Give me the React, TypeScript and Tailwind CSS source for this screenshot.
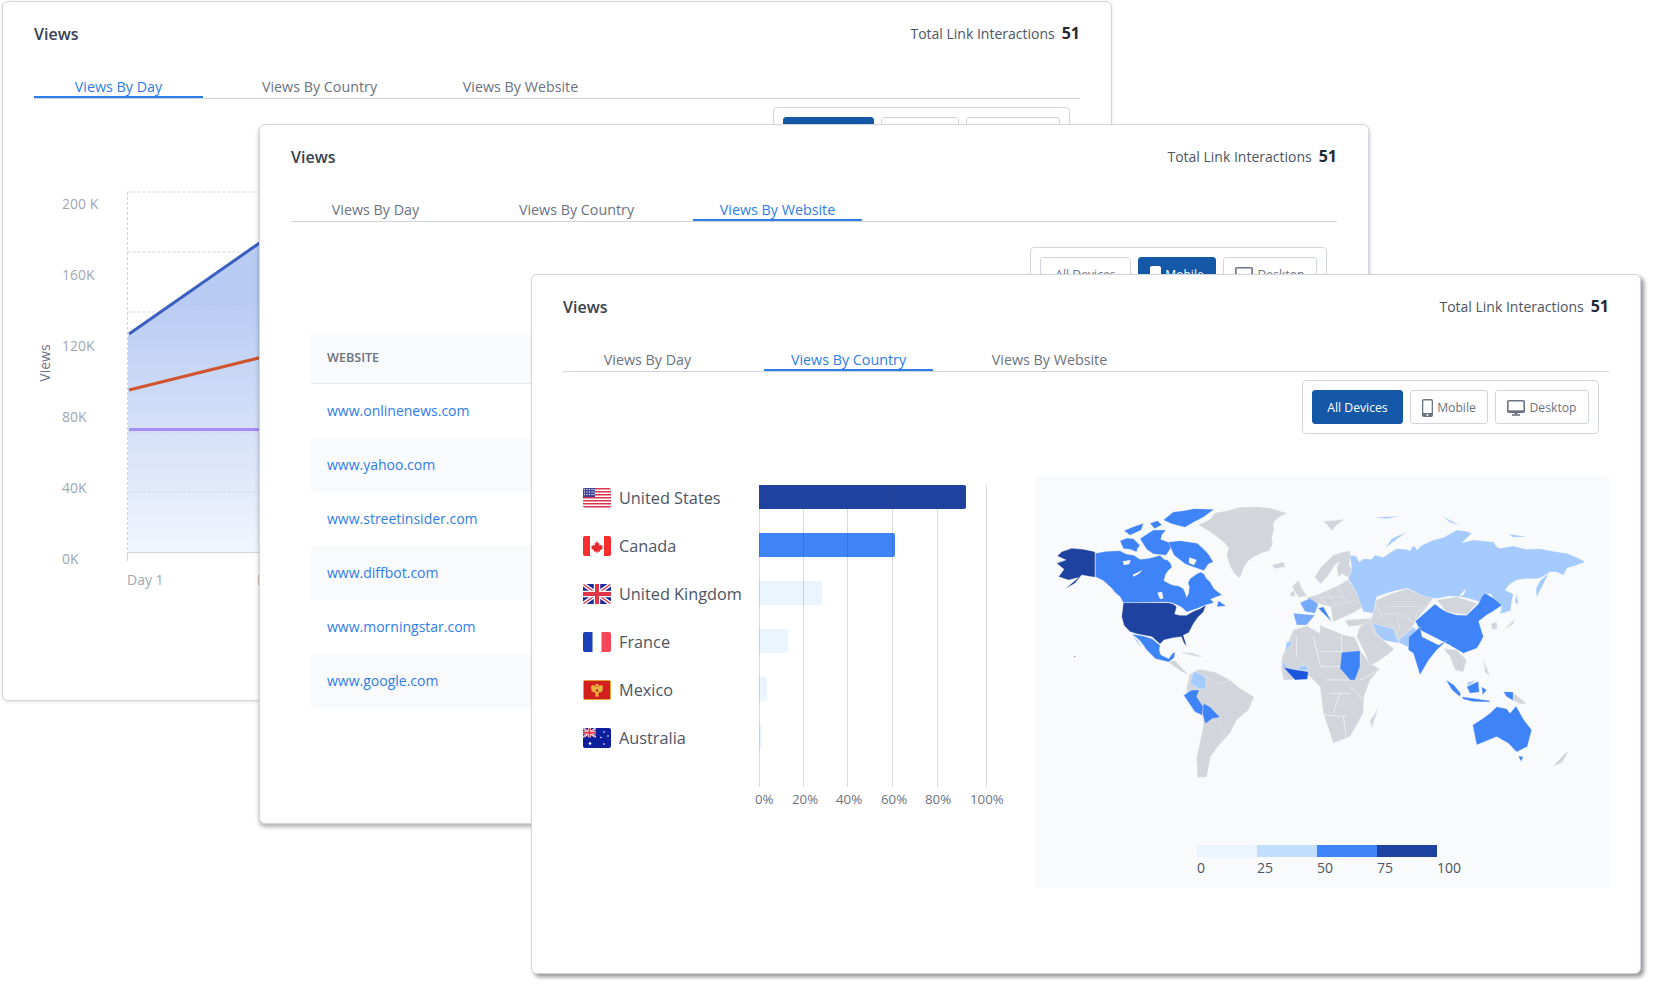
import React from "react";

const G = "#d2d6dc";
const B5 = "#3f83f8";
const B3 = "#a4cafe";
const B4 = "#76a9fa";
const B8 = "#1e429f";
const B6 = "#1a56db";

function PhoneIcon() {
  return (
    <svg width="11" height="18" viewBox="0 0 11 18" className="shrink-0">
      <rect x="0" y="0" width="11" height="18" rx="2" fill="currentColor" />
      <rect x="1.3" y="1.5" width="8.4" height="12.5" fill="#fff" />
      <circle cx="5.5" cy="16" r="1" fill="#fff" />
    </svg>
  );
}

function MonitorIcon() {
  return (
    <svg width="18" height="16" viewBox="0 0 18 16" className="shrink-0">
      <rect x="0.8" y="0.8" width="16.4" height="11.4" rx="1.2" fill="#fff" stroke="currentColor" strokeWidth="1.6" />
      <rect x="0.7" y="10.3" width="16.6" height="2.4" fill="currentColor" />
      <rect x="7.5" y="12.5" width="3" height="2" fill="currentColor" />
      <rect x="5" y="14.3" width="8" height="1.5" fill="currentColor" />
    </svg>
  );
}

function DeviceFilter({ active, top }: { active: number; top: string }) {
  const on = "bg-[#1558a8] border-[#1558a8] text-white";
  const off = "bg-white border-[#d2d6dc] text-[#6b7280]";
  return (
    <div className={"flex justify-end mr-[10px] " + top}>
      <div className="flex gap-[7px] p-[9px] border border-[#d2d6dc] rounded-[4px] bg-white">
        <div className={"flex items-center justify-center w-[91px] h-[34px] pt-[2px] rounded-[3px] border text-[12.2px] " + (active === 0 ? on : off)}>All Devices</div>
        <div className={"flex items-center justify-center gap-[4px] w-[78px] h-[34px] pt-[1px] rounded-[3px] border text-[12.2px] " + (active === 1 ? on : off)}>
          <PhoneIcon />
          <span className="pt-[1px]">Mobile</span>
        </div>
        <div className={"flex items-center justify-center gap-[4px] w-[94px] h-[34px] pt-[1px] rounded-[3px] border text-[12.2px] " + (active === 2 ? on : off)}>
          <MonitorIcon />
          <span className="pt-[1px]">Desktop</span>
        </div>
      </div>
    </div>
  );
}

function CardHead({ active }: { active: number }) {
  const tabs = ["Views By Day", "Views By Country", "Views By Website"];
  return (
    <>
      <div className="flex items-center justify-between h-[22px]">
        <div className="pt-[1px] text-[16px] font-semibold text-[#374151]">Views</div>
        <div className="flex items-center gap-[7px]">
          <span className="text-[14px] text-[#4b5563]">Total Link Interactions</span>
          <span className="text-[16px] font-bold text-[#1f2937]">51</span>
        </div>
      </div>
      <div className="flex gap-[32px] mt-[32px] border-b border-[#d2d6dc]">
        {tabs.map((t, i) => (
          <div
            key={t}
            className={
              i === active
                ? "w-[169px] h-[22px] pt-[1px] text-center text-[14.3px] leading-[20px] text-[#2f7de8] border-b-2 border-[#2f7de8]"
                : "w-[169px] h-[22px] pt-[1px] text-center text-[14.3px] leading-[20px] text-[#6b7280]"
            }
          >
            {t}
          </div>
        ))}
      </div>
    </>
  );
}

function AreaChart() {
  const txt = { fontSize: 14, fill: "#9fa6b2" };
  const ys = [
    ["200 K", 209],
    ["160K", 280],
    ["120K", 351],
    ["80K", 422],
    ["40K", 493],
    ["0K", 564],
  ] as const;
  return (
    <svg viewBox="34 180 1046 430" className="block w-[1046px] h-[430px] mt-[19px]">
      <defs>
        <linearGradient id="area" gradientUnits="userSpaceOnUse" x1="0" y1="300" x2="0" y2="552">
          <stop offset="0" stopColor="#b8cbf3" />
          <stop offset="1" stopColor="#f1f5fd" />
        </linearGradient>
      </defs>
      <polygon points="128,335 400,145 400,552 128,552" fill="url(#area)" />
      {[192, 252, 312, 372, 432, 492].map((y) => (
        <line key={y} x1="127.5" x2="400" y1={y} y2={y} stroke="#cfd3da" strokeWidth="1" strokeDasharray="3 2" />
      ))}
      <line x1="127.5" x2="127.5" y1="192" y2="552" stroke="#cfd3da" strokeWidth="1" strokeDasharray="3 2" />
      <line x1="127.5" x2="127.5" y1="552" y2="561" stroke="#d2d6dc" strokeWidth="1" />
      <line x1="127" x2="400" y1="552.5" y2="552.5" stroke="#d2d6dc" strokeWidth="1" />
      <line x1="129" y1="334" x2="400" y2="145" stroke="#3b5fc0" strokeWidth="3" />
      <line x1="129" y1="390" x2="400" y2="323" stroke="#d0552e" strokeWidth="3" />
      <line x1="129" y1="429.5" x2="400" y2="429.5" stroke="#a78bfa" strokeWidth="3" />
      {ys.map(([t, y]) => (
        <text key={t} x="62" y={y} {...txt}>{t}</text>
      ))}
      <text x="127" y="585" {...txt}>Day 1</text>
      <text x="257" y="585" {...txt}>Day 2</text>
      <text transform="translate(50 363) rotate(-90)" textAnchor="middle" fontSize="14" fill="#6b7280">Views</text>
    </svg>
  );
}

function UsFlag() {
  const rows = [0, 1, 2, 3, 4, 5, 6];
  return (
    <svg width="28" height="20" viewBox="0 0 28 20" className="rounded-[2px] shrink-0">
      <rect width="28" height="20" fill="#fff" />
      {rows.map((i) => (
        <rect key={i} x="0" y={i * 3} width="28" height="1.5" fill="#d9344f" />
      ))}
      <rect width="12" height="9" fill="#3d3f8f" />
      {[1.5, 4, 6.5].map((y) =>
        [1.5, 4, 6.5, 9, 11].map((x) => <circle key={x + "-" + y} cx={x} cy={y} r="0.7" fill="#e5e7f5" />)
      )}
    </svg>
  );
}

function CaFlag() {
  return (
    <svg width="28" height="20" viewBox="0 0 28 20" className="rounded-[2px] shrink-0">
      <rect width="28" height="20" fill="#fff" />
      <rect width="7" height="20" fill="#f92f2f" />
      <rect x="21" width="7" height="20" fill="#f92f2f" />
      <path d="M14 5l1.3 2.4 1.2-.6-.5 3 1.8-1 .5 1.2 1.6-.2-.8 2 .7.6-3 2.2.3 1.2-2.6-.4-.2 2h-.6l-.2-2-2.6.4.3-1.2-3-2.2.7-.6-.8-2 1.6.2.5-1.2 1.8 1-.5-3 1.2.6z" fill="#e8262c" />
    </svg>
  );
}

function UnionJack({ w, h }: { w: number; h: number }) {
  return (
    <svg x="0" y="0" width={w} height={h} viewBox="0 0 28 20" preserveAspectRatio="none">
      <rect width="28" height="20" fill="#1a2a9c" />
      <path d="M0 0L28 20M28 0L0 20" stroke="#fff" strokeWidth="4" />
      <path d="M0 0L28 20M28 0L0 20" stroke="#e0364a" strokeWidth="1.4" />
      <path d="M14 0V20M0 10H28" stroke="#fff" strokeWidth="6.5" />
      <path d="M14 0V20M0 10H28" stroke="#e0364a" strokeWidth="4" />
    </svg>
  );
}

function UkFlag() {
  return (
    <svg width="28" height="20" viewBox="0 0 28 20" className="rounded-[2px] shrink-0">
      <UnionJack w={28} h={20} />
    </svg>
  );
}

function FrFlag() {
  return (
    <svg width="28" height="20" viewBox="0 0 28 20" className="rounded-[2px] shrink-0">
      <rect width="28" height="20" fill="#fff" />
      <rect width="9.5" height="20" fill="#1a3fb8" />
      <rect x="18.5" width="9.5" height="20" fill="#f6465a" />
    </svg>
  );
}

function MxFlag() {
  return (
    <svg width="28" height="20" viewBox="0 0 28 20" className="rounded-[2px] shrink-0">
      <rect width="28" height="20" fill="#e0a43a" />
      <rect x="1" y="1" width="26" height="18" fill="#d3201f" />
      <path d="M12.7 6.5C11 4.6 8.6 5 8 6.5L8.6 11 10.5 12.5 12.6 10.5Z" fill="#e8b23e" />
      <path d="M15.3 6.5C17 4.6 19.4 5 20 6.5L19.4 11 17.5 12.5 15.4 10.5Z" fill="#e8b23e" />
      <rect x="12.4" y="4" width="3.2" height="2.4" rx="1" fill="#e8b23e" />
      <ellipse cx="14" cy="10.5" rx="2.6" ry="4" fill="#e8b23e" />
      <path d="M14 13L11.6 16.5H16.4Z" fill="#e8b23e" />
      <rect x="13" y="9" width="2" height="3" fill="#b8452a" />
    </svg>
  );
}

function AuFlag() {
  const stars: [number, number][] = [[7, 15.5], [21, 4], [25, 8], [18, 9.5], [21, 16]];
  return (
    <svg width="28" height="20" viewBox="0 0 28 20" className="rounded-[2px] shrink-0">
      <rect width="28" height="20" fill="#0e1f9e" />
      <UnionJack w={13} h={9.5} />
      {stars.map(([x, y]) => (
        <circle key={x + "-" + y} cx={x} cy={y} r={y === 15.5 ? 1.3 : 0.8} fill="#fff" />
      ))}
    </svg>
  );
}

function WorldMap() {
  return (
    <svg viewBox="1035 476 574 360" className="block w-[574px] h-[360px]">
      <g transform="translate(1040 480) scale(0.33333)" stroke="#f9fafb" strokeWidth="1" strokeLinejoin="round">
        <path fill={G} d="M475 135L510 118 525 98 560 92 600 82 650 80 690 84 742 100 716 112 700 130 702 150 695 175 698 192 688 212 664 220 640 232 624 244 612 262 600 295 584 282 572 262 564 240 560 225 566 205 555 190 530 170 510 155Z" />
        <path fill={G} d="M695 255L730 246 736 260 705 266Z" />
        <path fill={B8} d="M165 215L130 208 95 205 65 215 52 228 78 240 50 250 72 268 56 290 85 300 115 293 76 326 105 310 125 285 165 292Z" />
        <path fill={B8} d="M102 528l4 0 0 3-4 0Z" />
        <path fill={B5} d="M166 220L200 214 240 212 258 222 282 226 300 238 320 236 340 232 360 226 372 238 382 240 392 250 396 262 384 272 376 285 372 302 386 310 400 316 416 318 430 326 436 340 440 352 446 340 448 320 444 308 450 296 470 282 482 276 492 282 500 296 510 305 522 326 546 345 530 350 512 358 522 368 495 376 470 386 440 396 428 384 418 378 400 370 382 366 250 368 240 350 226 338 215 325 204 314 190 302 166 290Z" />
        <path fill={B5} d="M240 182L262 174 280 176 300 196 292 206 290 216 270 208 250 206Z" />
        <path fill={B5} d="M252 152L280 140 310 130 304 150 270 166Z" />
        <path fill={B5} d="M330 130L352 122 366 134 344 146Z" />
        <path fill={B5} d="M370 120L385 108 400 96 430 92 462 86 522 88 490 112 462 126 435 142 396 132Z" />
        <path fill={B5} d="M300 176L318 164 340 150 378 150 366 164 362 178 400 192 390 208 378 226 340 222 320 208Z" />
        <path fill={B5} d="M385 186L420 182 472 190 490 206 505 222 520 246 505 252 492 272 462 262 436 252 402 226Z" />
        <path fill={B5} d="M536 362L558 378 530 380Z" />
        <path fill="#f9fafb" stroke="none" d="M248 244L272 240 268 252 252 256ZM278 284L308 270 296 282 280 290ZM448 232L470 240 462 256 446 248ZM352 338L366 335 370 355 360 358Z" />
        <path fill={B8} d="M250 368L385 368 400 372 410 380 404 402 420 406 440 406 460 394 480 386 498 375 490 396 474 412 462 428 446 458 430 466 440 498 432 490 424 470 396 474 372 480 360 492 336 470 292 462 270 455 252 436 245 410Z" />
        <path fill={B5} d="M276 462L310 468 336 476 348 486 360 496 358 510 362 524 386 536 398 520 406 516 402 534 386 546 346 536 320 510 300 482Z" />
        <path fill={B5} d="M278 466L306 506 292 482Z" />
        <path fill={G} d="M386 546L404 540 430 568 450 588 440 582 420 572 400 558Z" />
        <path fill={G} d="M420 515L455 518 490 530 470 530 440 522Z" />
        <path fill={G} d="M478 568L525 576 570 600 600 625 642 650 626 690 590 720 570 760 540 792 512 830 500 892 472 892 470 830 490 735 486 700 440 650 440 620 450 582Z" />
        <path fill={B3} d="M462 574L496 590 498 626 476 626 450 610Z" />
        <path fill={B5} d="M455 630L478 630 470 650 490 680 487 706 465 696 431 646Z" />
        <path fill={B5} d="M490 670L510 680 540 712 516 716 496 732 488 702Z" />
        <path fill="none" d="M498 590L540 612M570 600L540 612M470 830L490 735M540 745L560 770M520 720L545 745" />
      </g>
      <g transform="translate(1300 480) scale(0.33333)" stroke="#f9fafb" strokeWidth="1" strokeLinejoin="round">
        <path fill={G} d="M70 124L135 118 110 135 95 152 82 135Z" />
        <path fill={G} d="M-24 320L-5 300 8 330 22 348 -5 352ZM-28 335L-16 332 -14 348 -30 350Z" />
        <path fill={G} d="M44 292L62 262 85 240 100 225 130 215 150 212 152 232 148 256 158 268 150 290 145 292 125 282 115 292 110 262 118 245 104 255 90 280 62 312Z" />
        <path fill={G} d="M20 352L50 345 112 318 145 298 170 340 192 378 165 396 100 426 92 382 50 368 30 370Z" />
        <path fill="none" d="M50 345L90 380M80 332L110 380M112 318L140 370M92 382L165 360M60 352L130 350" />
        <path fill={B4} d="M0 368L30 355 55 372 45 400 15 395Z" />
        <path fill={B4} d="M-20 400L45 405 20 435 -10 435Z" />
        <path fill={B5} d="M55 385L70 380 95 425 75 405Z" />
        <path fill={G} d="M-55 535L-20 450 20 437 60 460 60 436 130 464 165 472 182 512 205 545 240 568 210 600 192 650 190 700 150 770 100 790 70 700 60 620 30 590 0 585 -25 600 -50 600 -56 560Z" />
        <path fill="none" strokeWidth="2" d="M-10 470L-10 530M40 470L62 560M62 515L125 515M125 465L125 515M62 560L120 560M75 600L150 600M70 705L140 710M90 640L150 640M150 620L190 660M100 700L120 640M130 710L140 780M180 600L240 570" />
        <path fill={B3} d="M-40 485L-20 485 -45 515ZM-55 545L-35 560 -50 565ZM-5 560L20 555 25 570 -5 572Z" />
        <path fill={B6} d="M-50 562L-10 570 25 575 22 598 -15 600Z" />
        <path fill={B5} d="M125 517L180 512 180 560 165 600 150 600 120 565Z" />
        <path fill={G} d="M235 685L215 745 210 722Z" />
        <path fill={G} d="M135 420L215 415 230 360 320 326 400 356 346 424 326 472 296 490 250 480 222 460 210 432 145 440Z" />
        <path fill={G} d="M178 442L210 420 222 460 250 480 282 508 262 525 225 550 208 555 195 520 170 470Z" />
        <path fill={B3} d="M145 295L156 270 150 226 168 228 178 246 190 236 214 238 225 226 250 232 270 218 290 206 318 208 330 212 340 196 352 210 362 198 400 180 432 172 470 150 500 154 515 160 486 188 520 180 560 184 580 185 590 200 600 205 640 198 680 208 720 206 760 214 800 220 830 232 856 245 830 256 802 264 790 286 768 276 750 276 728 290 712 296 680 296 650 300 630 312 615 330 640 342 634 370 632 392 600 402 606 376 590 368 570 340 540 366 510 356 480 350 450 348 415 355 375 355 345 335 320 325 275 335 230 350 220 400 190 395 170 340Z" />
        <path fill={B3} d="M255 205L320 155 275 176 262 196Z" />
        <path fill={B3} d="M426 108L480 136 452 128Z" />
        <path fill={B3} d="M625 162L682 170 640 172Z" />
        <path fill={B3} d="M710 352L746 280 722 300 708 325Z" />
        <path fill={B3} d="M650 340L655 372 645 368Z" />
        <path fill={B3} d="M220 112L305 108 260 116Z" />
        <path fill="#f9fafb" stroke="none" d="M476 350L498 325 492 344Z" />
        <path fill={G} d="M225 362L270 342 320 326 360 345 400 356 350 400 345 430 292 482 290 450 240 400Z" />
        <path fill="none" d="M240 400L300 400 345 430M290 400L300 450M260 380L350 380" />
        <path fill={G} d="M410 360L470 350 530 370 500 405 440 396Z" />
        <path fill={B3} d="M218 430L280 446 296 490 250 480 230 460Z" />
        <path fill={B3} d="M296 480L345 440 350 466 326 502 300 490Z" />
        <path fill={B5} d="M346 424L405 372 420 384 440 396 470 405 500 406 535 372 545 350 555 340 580 354 606 376 576 396 560 405 536 424 550 470 540 490 530 505 490 520 450 496 400 470 360 450Z" />
        <path fill={B5} d="M326 472L360 440 366 470 416 495 440 482 410 510 386 540 360 585 340 520 325 510Z" />
        <path fill={G} d="M430 505L470 510 500 540 490 576 465 570 450 530Z" />
        <path fill={G} d="M595 465L645 416 652 396 640 432 610 450Z" />
        <path fill={G} d="M572 432L590 425 592 445 578 450Z" />
        <path fill={G} d="M550 535L570 590 555 575Z" />
        <path fill={B5} d="M438 600L462 615 482 640 480 650 456 630Z" />
        <path fill={B5} d="M485 650L520 655 570 662 568 666 520 665 490 658Z" />
        <path fill={B5} d="M500 620L535 604 538 636 510 640Z" />
        <path fill={B3} d="M500 608L528 600 505 618Z" />
        <path fill={B5} d="M545 620L560 630 548 645Z" />
        <path fill={B5} d="M610 635L640 636 640 662 620 650Z" />
        <path fill={G} d="M640 638L680 670 660 672 640 662Z" />
        <path fill={B5} d="M518 735L545 718 570 700 590 680 620 686 630 700 648 678 672 720 695 750 682 800 650 816 625 790 590 770 530 795 525 770Z" />
        <path fill={B5} d="M655 828L670 830 663 845Z" />
        <path fill={G} d="M758 860L795 820 806 815 786 848Z" />
      </g>
    </svg>
  );
}

function CountryChart() {
  const rows = [
    { name: "United States", flag: <UsFlag />, w: 207, c: "bg-[#1e429f]" },
    { name: "Canada", flag: <CaFlag />, w: 136, c: "bg-[#3f83f8]" },
    { name: "United Kingdom", flag: <UkFlag />, w: 63, c: "bg-[#ebf5ff]" },
    { name: "France", flag: <FrFlag />, w: 29, c: "bg-[#ebf5ff]" },
    { name: "Mexico", flag: <MxFlag />, w: 8, c: "bg-[#ebf5ff]" },
    { name: "Australia", flag: <AuFlag />, w: 3, c: "bg-[#ebf5ff]" },
  ];
  return (
    <div className="flex w-[452px] ml-[20px] pt-[9px] shrink-0">
      <div className="flex flex-col gap-[24px] w-[176px] mt-[1px]">
        {rows.map((r) => (
          <div key={r.name} className="flex items-center gap-[8px] h-[24px]">
            {r.flag}
            <span className="text-[16.3px] text-[#4b5563]">{r.name}</span>
          </div>
        ))}
      </div>
      <div className="flex flex-col w-[276px]">
        <div className="relative h-[302px] flex flex-col gap-[24px]">
          {rows.map((r) => (
            <div key={r.name} className={"h-[24px] rounded-r-[2px] " + r.c} style={{ width: r.w }} />
          ))}
          <div className="absolute top-0 bottom-0 left-0 w-px bg-[#374151]/20" />
          <div className="absolute top-0 bottom-0 left-[44px] w-px bg-[#374151]/20" />
          <div className="absolute top-0 bottom-0 left-[88px] w-px bg-[#374151]/20" />
          <div className="absolute top-0 bottom-0 left-[133px] w-px bg-[#374151]/20" />
          <div className="absolute top-0 bottom-0 left-[178px] w-px bg-[#374151]/20" />
          <div className="absolute top-0 bottom-0 left-[227px] w-px bg-[#374151]/20" />
        </div>
        <div className="flex mt-[2px] -ml-[4px] text-[13.3px] leading-[20px] text-[#6b7280]">
          <span className="w-[37px]">0%</span>
          <span className="w-[44px]">20%</span>
          <span className="w-[45px]">40%</span>
          <span className="w-[44px]">60%</span>
          <span className="w-[45px]">80%</span>
          <span>100%</span>
        </div>
      </div>
    </div>
  );
}

function MapPanel() {
  return (
    <div className="w-[574px] h-[412px] bg-[#f9fafb] shrink-0">
      <WorldMap />
      <div className="ml-[162px] mt-[9px] w-[290px]">
        <div className="flex">
          <div className="w-[60px] h-[12px] bg-[#ebf5ff]" />
          <div className="w-[60px] h-[12px] bg-[#c3ddfd]" />
          <div className="w-[60px] h-[12px] bg-[#3f83f8]" />
          <div className="w-[60px] h-[12px] bg-[#1e429f]" />
        </div>
        <div className="flex text-[14px] leading-[20px] text-[#4b5563] mt-[1px]">
          <span className="w-[60px]">0</span>
          <span className="w-[60px]">25</span>
          <span className="w-[60px]">50</span>
          <span className="w-[60px]">75</span>
          <span>100</span>
        </div>
      </div>
    </div>
  );
}

function SiteTable() {
  const sites = ["www.onlinenews.com", "www.yahoo.com", "www.streetinsider.com", "www.diffbot.com", "www.morningstar.com", "www.google.com"];
  return (
    <div className="ml-[20px] mt-[32px]">
      <div className="flex items-center h-[51px] px-[16px] bg-[#f9fafb] border-b border-[#e5e7eb] text-[12.6px] font-semibold text-[#6b7280]">WEBSITE</div>
      {sites.map((s, i) => (
        <div key={s} className={"flex items-center h-[54px] pb-[2px] px-[16px] text-[14px] text-[#2f7de8] " + (i % 2 === 1 ? "bg-[#f9fafb]" : "bg-white")}>{s}</div>
      ))}
    </div>
  );
}

export default function App() {
  const card = "absolute w-[1110px] h-[700px] bg-white border border-[#d2d6dc] rounded-[6px] pt-[20px] pl-[31px] pr-[31px] overflow-hidden";
  return (
    <div className="relative w-[1655px] h-[987px] bg-white overflow-hidden font-['Open_Sans',sans-serif]">
      <div className={card + " left-[2px] top-[1px] shadow-[0_1px_3px_rgba(0,0,0,0.12)]"}>
        <CardHead active={0} />
        <DeviceFilter active={0} top="mt-[8px]" />
        <AreaChart />
      </div>
      <div className={card + " left-[259px] top-[124px] shadow-[0_3px_4px_rgba(0,0,0,0.3)]"}>
        <CardHead active={2} />
        <DeviceFilter active={1} top="mt-[25px]" />
        <SiteTable />
      </div>
      <div className={card + " left-[531px] top-[274px] shadow-[3px_3px_4px_rgba(0,0,0,0.42)]"}>
        <CardHead active={1} />
        <DeviceFilter active={0} top="mt-[8px]" />
        <div className="flex mt-[42px]">
          <CountryChart />
          <MapPanel />
        </div>
      </div>
    </div>
  );
}
